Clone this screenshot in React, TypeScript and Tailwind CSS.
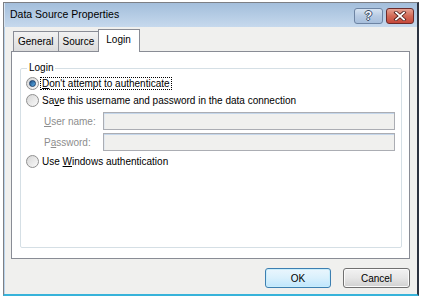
import React from "react";

const font = { fontFamily: '"Liberation Sans", Arial, sans-serif' };

function Radio({ checked, children }: { checked?: boolean; children: React.ReactNode }) {
  return (
    <div className="flex items-center h-[17px] whitespace-nowrap">
      <div className="w-[13px] h-[13px] rounded-full border border-[#8f8f8f] bg-gradient-to-br from-[#d6d6d6] to-[#fafafa] flex items-center justify-center shrink-0">
        {checked && (
          <div className="w-[7px] h-[7px] rounded-full bg-gradient-to-br from-[#1f4f86] to-[#5cb2ec] border border-[#1c3f6b]" />
        )}
      </div>
      <div className="ml-[2px]">{children}</div>
    </div>
  );
}

function TextField({ label }: { label: React.ReactNode }) {
  return (
    <div className="flex items-center h-[18px] whitespace-nowrap">
      <div className="w-[77px] pl-[18px] shrink-0 text-[#8d8d8d]">{label}</div>
      <div className="w-[292px] h-[18px] border border-[#abadb3] bg-[#f0f0ee] shadow-[inset_0_1px_0_#c4d6ea,inset_1px_0_0_#e2e9f0]" />
    </div>
  );
}

export default function App() {
  return (
    <div className="w-[424px] h-[299px] bg-white pt-[2px] pl-[3px] text-[10px] text-black" style={font}>
      <div className="w-[416px] h-[294px] flex flex-col border-l border-t border-[#7d7f84] border-r-2 border-r-[#2c3340] border-b-2 border-b-[#37b3da]">
        {/* Title bar */}
        <div className="h-[24px] flex items-center bg-gradient-to-b from-[#a3bedb] to-[#c6d9ed] border-l border-[#d6e4f2] shrink-0">
          <div className="ml-[5px] text-[10.5px] text-black flex-1">Data Source Properties</div>
          <div className="flex items-center gap-[3px] mr-[3px] mt-[1px]">
            <div className="w-[29px] h-[16px] rounded-[3px] border border-[#6d84a3] bg-gradient-to-b from-[#d7e4f2] via-[#b8cbe3] to-[#a7bfdc] flex items-center justify-center">
              <span
                className="text-[12px] font-bold text-[#f4f7fb] leading-none"
                style={{ textShadow: "1px 0 0 #3a4d66, -1px 0 0 #3a4d66, 0 1px 0 #3a4d66, 0 -1px 0 #3a4d66" }}
              >
                ?
              </span>
            </div>
            <div className="w-[28px] h-[16px] rounded-[3px] border border-[#6b2b2b] bg-gradient-to-b from-[#e6a293] via-[#d26a57] to-[#c5473a] flex items-center justify-center">
              <svg width="14" height="10" viewBox="0 0 14 10">
                <path d="M3 1.5 L11 8.5 M11 1.5 L3 8.5" stroke="#4a1a18" strokeWidth="3.4" strokeLinecap="square" />
                <path d="M3 1.5 L11 8.5 M11 1.5 L3 8.5" stroke="#ffffff" strokeWidth="1.8" strokeLinecap="square" />
              </svg>
            </div>
          </div>
        </div>
        {/* Body */}
        <div className="flex-1 bg-[#f0f0ee] flex flex-col pl-[6px] pr-[6px] pt-[2px] border-l border-[#b9d3ea]">
          {/* Tabs */}
          <div className="flex items-end h-[22px] pl-[2px] relative z-10">
            <div className="h-[20px] px-[4px] flex items-center border border-b-0 border-[#898c95] bg-gradient-to-b from-[#f2f2f2] to-[#dcdcdc]">General</div>
            <div className="h-[20px] px-[4px] flex items-center border border-b-0 border-l-0 border-[#898c95] bg-gradient-to-b from-[#f2f2f2] to-[#dcdcdc]">Source</div>
            <div className="h-[23px] w-[42px] pl-[7px] pb-[3px] flex items-center border border-b-0 border-[#898c95] bg-white mb-[-1px] ml-[-1px]">Login</div>
          </div>
          <div className="h-[208px] w-[399px] bg-white border border-[#898c95] pt-[9px] pl-[8px]">
            <fieldset className="w-[382px] h-[187px] border border-[#d5dfe5] rounded-[2px] pl-[5px] pt-0">
              <legend className="ml-[1px] px-[2px] leading-[14px]">Login</legend>
              <div className="flex flex-col">
                <Radio checked>
                  <span className="outline outline-1 outline-dotted outline-black px-[1px]"><u>D</u>on't attempt to authenticate</span>
                </Radio>
                <Radio>
                  <span className="px-[1px]">Sa<u>v</u>e this username and password in the data connection</span>
                </Radio>
                <div className="flex flex-col gap-[3px] mt-[3px]">
                  <TextField label={<><u>U</u>ser name:</>} />
                  <TextField label={<>P<u>a</u>ssword:</>} />
                </div>
                <div className="mt-[2px]">
                  <Radio>
                    <span className="px-[1px]">Use <u>W</u>indows authentication</span>
                  </Radio>
                </div>
              </div>
            </fieldset>
          </div>
          <div className="flex justify-end gap-[12px] mt-[9px] pr-[1px]">
            <div className="w-[66px] h-[20px] rounded-[3px] border border-[#3c7fb1] bg-gradient-to-b from-[#eaf6fd] via-[#d9f0fc] to-[#bee6fd] flex items-center justify-center shadow-[inset_0_0_0_1px_#c9edfb]">OK</div>
            <div className="w-[67px] h-[20px] rounded-[3px] border border-[#707070] bg-gradient-to-b from-[#f2f2f2] via-[#e6e6e6] to-[#d0d0d0] flex items-center justify-center shadow-[inset_0_0_0_1px_#fbfbfb]">Cancel</div>
          </div>
        </div>
      </div>
    </div>
  );
}
